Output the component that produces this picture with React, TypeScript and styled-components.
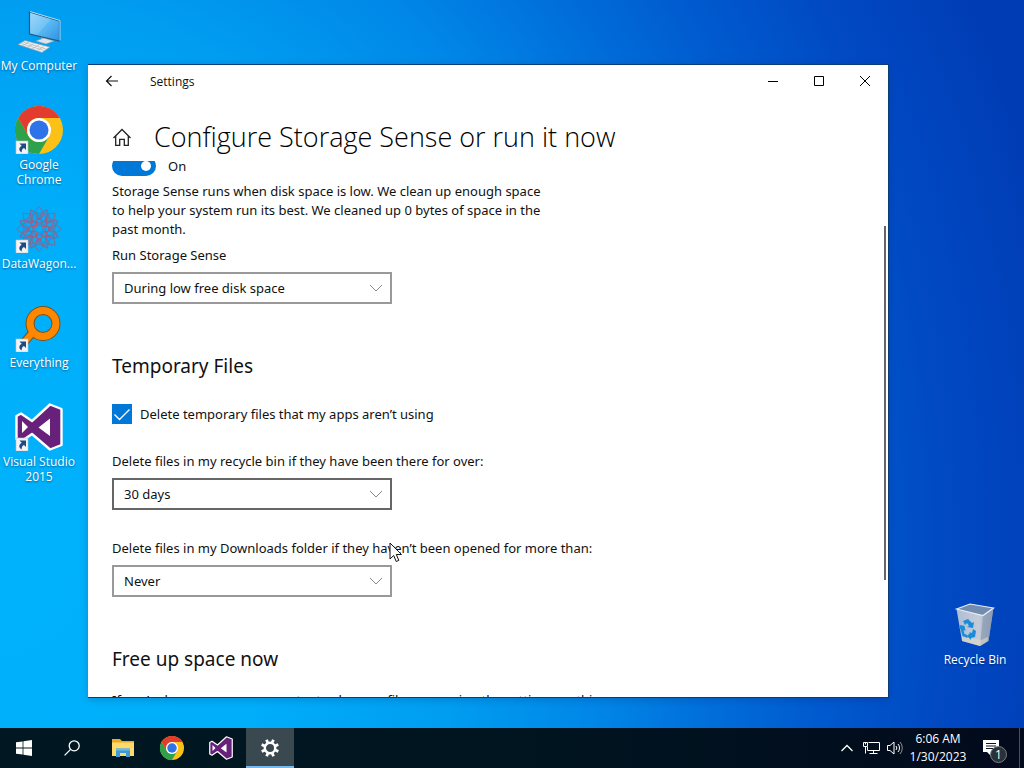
import React from "react";
import styled, { createGlobalStyle } from "styled-components";

const GlobalStyle = createGlobalStyle`
  *, *::before, *::after { box-sizing: border-box; }
  body { margin: 0; font-family: "Open Sans", "Noto Sans", sans-serif; font-size: 13px; color: #111; }
  button, select, input { font: inherit; color: inherit; margin: 0; }
  button { background: none; border: 0; padding: 0; }
  h1, h2, p { margin: 0; font-weight: 400; }
`;

const Screen = styled.div`
  display: flex;
  flex-direction: column;
  height: 100vh;
  overflow: hidden;
`;

const Desktop = styled.main`
  position: relative;
  flex: 1;
  min-height: 0;
  padding-top: 7px;
  background: radial-gradient(
    100% 165% at 0% 75%,
    #00b2fc 0%,
    #00aefa 28%,
    #009df1 46%,
    #0086e7 60%,
    #0072dc 69%,
    #005cd0 80%,
    #004ac4 92%,
    #003cb4 106%
  );
`;

const IconColumn = styled.nav`
  display: grid;
  grid-auto-rows: 99px;
  width: 78px;
`;

const Shortcut = styled.button`
  display: flex;
  flex-direction: column;
  align-items: center;
  justify-content: flex-start;
  gap: 3px;
  width: 78px;
  color: #fff;
  font-size: 12px;
  line-height: 15px;
  text-shadow: 0 1px 2px rgba(0, 20, 60, 0.5);

  svg { display: block; }
`;

const BinSpot = styled.div`
  position: absolute;
  right: 10px;
  bottom: 61px;
`;

const Window = styled.section`
  position: absolute;
  inset: 64px 136px 30px 88px;
  display: flex;
  flex-direction: column;
  background: #fff;
  border: solid #0a3d78;
  border-width: 1px 0;
  box-shadow: 1px 0 #0a3d78, 0 2px 8px rgba(0, 20, 80, 0.2);
`;

const TitleBar = styled.header`
  display: flex;
  align-items: center;
  height: 32px;
  font-size: 12px;
`;

const CaptionButton = styled.button<{ $width?: number }>`
  display: grid;
  place-items: center;
  width: ${(p) => p.$width ?? 46}px;
  height: 32px;
`;

const AppName = styled.span`
  flex: 1;
  padding: 1px 0 0 14px;
`;

const PageHeader = styled.div`
  display: flex;
  align-items: center;
  gap: 22px;
  height: 64px;
  padding: 18px 24px 0 24px;
`;

const HomeButton = styled.button`
  display: grid;
  place-items: center;
  width: 20px;
  height: 20px;
`;

const PageTitle = styled.h1`
  && { font-weight: 300; }
  padding-bottom: 2px;
  color: #000;
  font-size: 27px;
  line-height: 36px;
  white-space: nowrap;
`;

const Viewport = styled.div`
  position: relative;
  flex: 1;
  min-height: 0;
  overflow: hidden;
`;

const Content = styled.div`
  margin-top: -5px;
  padding: 0 24px;
  font-family: "Noto Sans", "Open Sans", sans-serif;
  line-height: 19px;
`;

const ScrollThumb = styled.div`
  position: absolute;
  top: 65px;
  right: 2px;
  width: 2px;
  height: 66%;
  background: #666;
`;

const Row = styled.label<{ $gap: number }>`
  display: flex;
  align-items: center;
  gap: ${(p) => p.$gap}px;
  height: 20px;
`;

const Switch = styled.input`
  appearance: none;
  width: 44px;
  height: 20px;
  padding: 5px;
  border-radius: 10px;
  background: #0078d7;

  &::before {
    content: "";
    display: block;
    width: 10px;
    height: 10px;
    margin-left: auto;
    border-radius: 50%;
    background: #fff;
  }
`;

const Intro = styled.p`
  max-width: 440px;
  padding: 6px 0 7px;
`;

const Field = styled.div`
  display: flex;
  flex-direction: column;
  align-items: flex-start;
  gap: 7px;

  & + & { margin-top: 29px; }
`;

const SelectBox = styled.div`
  display: grid;
  align-items: center;
  width: 280px;
  max-width: 100%;

  > * { grid-area: 1 / 1; }
  > svg { justify-self: end; margin-right: 9px; pointer-events: none; }
`;

const Select = styled.select<{ $active?: boolean }>`
  appearance: none;
  width: 100%;
  height: 32px;
  padding: 0 32px 0 10px;
  border: 2px solid ${(p) => (p.$active ? "#666" : "#999")};
  border-radius: 0;
  background: #fff;
`;

const SectionTitle = styled.h2`
  padding: 48px 0 24px;
  font-size: 19px;
  line-height: 28px;
`;

const CheckMark = styled.span`
  display: grid;
  width: 20px;
  height: 20px;

  > * { grid-area: 1 / 1; }
  > svg { pointer-events: none; }
`;

const CheckInput = styled.input`
  appearance: none;
  width: 20px;
  height: 20px;
  background: #0078d7;
`;

const Options = styled.div`
  padding-top: 28px;
`;

const FooterText = styled.p`
  margin-top: -6px;
  white-space: nowrap;
`;

const Pointer = styled.svg`
  position: absolute;
  left: 389px;
  top: 542px;
`;

const Taskbar = styled.footer`
  display: flex;
  justify-content: space-between;
  height: 40px;
  color: #fff;
  background: linear-gradient(90deg, #001822, #001420 55%, #020a1c);
`;

const TaskGroup = styled.div`
  display: flex;
`;

const PinnedGroup = styled.div`
  display: flex;
  gap: 1px;
  padding-left: 3px;
`;

const TaskButton = styled.button<{ $active?: boolean }>`
  display: grid;
  place-items: center;
  width: 48px;
  height: 40px;
  background: ${(p) => (p.$active ? "#3a4850" : "transparent")};
  box-shadow: ${(p) => (p.$active ? "inset 0 -2px #76b9ed" : "none")};
`;

const TrayButton = styled.button`
  display: grid;
  place-items: center;
  width: 24px;
  height: 40px;
`;

const Clock = styled.button`
  width: 62px;
  font-size: 12px;
  line-height: 18px;
  white-space: nowrap;
`;

const NoticeButton = styled.button`
  position: relative;
  width: 51px;
  height: 40px;
  padding: 0 0 0 14px;
  border-right: 1px solid #46505c;
  margin-right: 4px;
  text-align: left;

  svg { display: block; }
`;

const NoticeCount = styled.span`
  position: absolute;
  left: 21px;
  top: 18px;
  width: 17px;
  height: 17px;
  border: 1px solid #777f87;
  border-radius: 50%;
  background: #2b3138;
  font-size: 12px;
  line-height: 15px;
  text-align: center;
`;

const ShortcutArrow = () => (
  <g>
    <rect x="1" y="35" width="12" height="13" fill="#f4f4f4" stroke="#b8c4cc" strokeWidth=".6" />
    <path d="M4.5 37.5h6.5v6.5l-2-2c-2 1-2.6 2.6-2.2 4.6C3.4 44.6 3.6 41.6 6.7 39.7z" fill="#204a86" />
  </g>
);

const ChromeShape = () => (
  <g>
    <circle cx="24" cy="24" r="24" fill="#fbc116" />
    <path d="M3.200 12A24 24 0 0 0 24 48l10.400-18A12 12 0 0 1 13.600 30z" fill="#2da14b" />
    <path d="M24 12h20.800A24 24 0 0 0 3.200 12l10.400 18A12 12 0 0 1 24 12z" fill="#e33b2e" />
    <circle cx="24" cy="24" r="12" fill="#fff" />
    <circle cx="24" cy="24" r="9.500" fill="#2f73e8" />
  </g>
);

const VsShape = () => (
  <g>
    <path
      d="M35 1.500 46.500 6v36L35 46.500 17 31 6 38.500 1.500 36V13L6 10.500 17 18z"
      fill="#68217a"
      stroke="#fff"
      strokeWidth="2.400"
      strokeLinejoin="round"
    />
    <path d="M7 18v12l6-6zM35 15.500 23.500 24.500 35 33z" fill="#fff" />
  </g>
);

const ComputerIcon = () => (
  <svg width="48" height="48" viewBox="0 0 48 48">
    <defs>
      <linearGradient id="monitor" x1="0" y1="0" x2="1" y2="1">
        <stop offset="0" stopColor="#8ed4fb" />
        <stop offset=".55" stopColor="#56b6f2" />
        <stop offset="1" stopColor="#2e92e0" />
      </linearGradient>
    </defs>
    <path d="M26 29l6 2v3l-6-1z" fill="#9ca9b2" />
    <path d="M21 34l8-3 10 3-8 3z" fill="#dce4e8" stroke="#8aa0ae" strokeWidth=".5" />
    <path d="M14.500 5 44.500 14v20l-30-7z" fill="url(#monitor)" stroke="#24587f" strokeWidth="1.200" />
    <path d="M15 4.500 45 13.500v20" fill="none" stroke="#b6dff4" strokeWidth="1" />
    <path d="M15 6 36 12 22 28l-7-2z" fill="#fff" opacity=".14" />
    <path d="M10 33.500 35 40l-8 5.500L3 37.500z" fill="#eef1f2" stroke="#8d9ba5" strokeWidth=".7" />
    <path d="M8 35l23 7M6 36.500l23 7M14 35l-7 4M19 36.500l-7 4M24 38l-7 4M29 39.500l-7 4" stroke="#adb6bb" strokeWidth=".7" />
  </svg>
);

const ChromeIcon = () => (
  <svg width="48" height="48" viewBox="0 0 48 48">
    <ChromeShape />
    <ShortcutArrow />
  </svg>
);

const RosetteIcon = () => (
  <svg width="48" height="48" viewBox="0 0 48 48">
    <g fill="none" stroke="#6a74a6" strokeWidth="1">
      {[0, 45, 90, 135, 180, 225, 270, 315].map((a) => (
        <g key={a} transform={`rotate(${a} 24 24)`}>
          <path d="M24 15l6-6-6-7.500L18 9z" />
          <path d="M24 18l9-4-1-9-8 4-8-4-1 9z" />
          <path d="M24 12.500l3.500 4.500-3.500 3.500-3.500-3.500z" stroke="#a85a80" />
          <path d="M20 8c1 3 3 4 4 7 1-3 3-4 4-7" stroke="#a85a80" />
        </g>
      ))}
    </g>
    <ShortcutArrow />
  </svg>
);

const EverythingIcon = () => (
  <svg width="48" height="48" viewBox="0 0 48 48">
    <path d="M17 29 7 41" stroke="#7c5118" strokeWidth="8.500" />
    <circle cx="28" cy="19.500" r="13" fill="none" stroke="#7c5118" strokeWidth="9" />
    <path d="M18 28 7 41" stroke="#ff8700" strokeWidth="6.500" />
    <circle cx="28" cy="19.500" r="13" fill="none" stroke="#ff8700" strokeWidth="7" />
    <ShortcutArrow />
  </svg>
);

const VisualStudioIcon = () => (
  <svg width="48" height="48" viewBox="0 0 48 48">
    <VsShape />
    <ShortcutArrow />
  </svg>
);

const BinIcon = () => (
  <svg width="48" height="48" viewBox="0 0 48 48">
    <defs>
      <linearGradient id="bin" x1="0" x2="1">
        <stop offset="0" stopColor="#b7c4d4" />
        <stop offset=".6" stopColor="#cfd3da" />
        <stop offset="1" stopColor="#9caabd" />
      </linearGradient>
    </defs>
    <path d="M5.500 8 32 14.500 42.500 7 37.500 40l-8.500 5L11 40z" fill="url(#bin)" opacity=".95" />
    <path d="M32 14.500 42.500 7 37.500 40l-8.500 5z" fill="#8797ae" opacity=".65" />
    <path d="M5.500 8 19 3l23.500 4L32 14.500z" fill="#718caf" stroke="#e8eff6" strokeWidth="1.200" />
    <path d="M11 36l19 3 7-3-.5 4-7.500 5L11 40z" fill="#e0d8ca" opacity=".6" />
    <g fill="#1c8cd8">
      <path d="M12 20l5-2 4 4 2-1-1 6-6-1 2-1-2-3-2 2z" />
      <path d="M9.500 24l4 1 1 5-2-1 1 4 3 1v3l-5-2-2-7-2-1z" />
      <path d="M18 31l3 1 1-4 3 2-1 6-4 1v2l-4-4 3-3z" />
    </g>
  </svg>
);

const Chevron = () => (
  <svg width="14" height="8" viewBox="0 0 14 8" fill="none" stroke="#888" aria-hidden="true">
    <path d="M1 1l6 6 6-6" />
  </svg>
);

type PickerProps = { id: string; label: string; options: string[]; active?: boolean };

const Picker = ({ id, label, options, active }: PickerProps) => (
  <Field>
    <label htmlFor={id}>{label}</label>
    <SelectBox>
      <Select id={id} $active={active}>
        {options.map((o) => (
          <option key={o}>{o}</option>
        ))}
      </Select>
      <Chevron />
    </SelectBox>
  </Field>
);

const SettingsWindow = () => (
  <Window aria-label="Settings">
    <TitleBar>
      <CaptionButton aria-label="Back" $width={48}>
        <svg width="14" height="12" viewBox="0 0 14 12" fill="none" stroke="#111" strokeWidth="1.200">
          <path d="M13 6H1.500M6.500 1l-5 5 5 5" />
        </svg>
      </CaptionButton>
      <AppName>Settings</AppName>
      <CaptionButton aria-label="Minimize">
        <svg width="10" height="10" stroke="#000"><path d="M0 5.500h10" /></svg>
      </CaptionButton>
      <CaptionButton aria-label="Maximize">
        <svg width="10" height="10" stroke="#000" fill="none"><path d="M.5.5h9v9h-9z" /></svg>
      </CaptionButton>
      <CaptionButton aria-label="Close">
        <svg width="10" height="10" stroke="#000"><path d="M0 0l10 10M10 0 0 10" /></svg>
      </CaptionButton>
    </TitleBar>
    <PageHeader>
      <HomeButton aria-label="Home">
        <svg width="20" height="20" viewBox="0 0 20 20" fill="none" stroke="#222" strokeWidth="1.300">
          <path d="M1.500 10 10 1.500l8.500 8.500M3.700 8v9.300h4v-6h4.600v6h4V8" />
        </svg>
      </HomeButton>
      <PageTitle>Configure Storage Sense or run it now</PageTitle>
    </PageHeader>
    <Viewport>
      <Content>
        <Row $gap={12}>
          <Switch type="checkbox" role="switch" defaultChecked />
          On
        </Row>
        <Intro>
          Storage Sense runs when disk space is low. We clean up enough space to help your system run
          its best. We cleaned up 0 bytes of space in the past month.
        </Intro>
        <Picker id="run" label="Run Storage Sense" options={["During low free disk space", "Every day", "Every week", "Every month"]} />
        <SectionTitle>Temporary Files</SectionTitle>
        <Row $gap={8}>
          <CheckMark>
            <CheckInput type="checkbox" defaultChecked />
            <svg width="20" height="20" fill="none" stroke="#fff" strokeWidth="1.400">
              <path d="M2.500 10.500 7.500 15.500 17.500 5.500" />
            </svg>
          </CheckMark>
          Delete temporary files that my apps aren’t using
        </Row>
        <Options>
          <Picker
            id="bin-age"
            label="Delete files in my recycle bin if they have been there for over:"
            options={["30 days", "Never", "1 day", "14 days", "60 days"]}
            active
          />
          <Picker
            id="downloads-age"
            label="Delete files in my Downloads folder if they haven’t been opened for more than:"
            options={["Never", "1 day", "14 days", "30 days", "60 days"]}
          />
        </Options>
        <SectionTitle>Free up space now</SectionTitle>
        <FooterText>
          If you’re low on space, we can try to clean up files now using the settings on this page.
        </FooterText>
      </Content>
      <ScrollThumb />
    </Viewport>
  </Window>
);

export default function App() {
  return (
    <Screen>
      <GlobalStyle />
      <Desktop>
        <IconColumn aria-label="Desktop">
          <Shortcut><ComputerIcon />My Computer</Shortcut>
          <Shortcut><ChromeIcon /><span>Google<br />Chrome</span></Shortcut>
          <Shortcut><RosetteIcon />DataWagon...</Shortcut>
          <Shortcut><EverythingIcon />Everything</Shortcut>
          <Shortcut><VisualStudioIcon /><span>Visual Studio<br />2015</span></Shortcut>
        </IconColumn>
        <BinSpot>
          <Shortcut><BinIcon />Recycle Bin</Shortcut>
        </BinSpot>
        <SettingsWindow />
        <Pointer width="14" height="22" viewBox="0 0 14 22" aria-hidden="true">
          <path d="M1 1v16l3.700-3.500 2.500 6 2.600-1.100-2.500-5.900h5.200z" fill="#fff" stroke="#111" />
        </Pointer>
      </Desktop>
      <Taskbar>
        <TaskGroup>
          <TaskButton aria-label="Start">
            <svg width="16" height="16" viewBox="0 0 16 16" fill="#fff">
              <path d="M0 2.300 6.600 1.400v6.200H0zM7.400 1.300 16 0v7.600H7.400zM0 8.400h6.600v6.200L0 13.700zM7.400 8.400H16V16l-8.600-1.300z" />
            </svg>
          </TaskButton>
          <TaskButton aria-label="Search">
            <svg width="16" height="16" viewBox="0 0 16 16" fill="none" stroke="#fff" strokeWidth="1.300">
              <circle cx="10.200" cy="5.800" r="5" />
              <path d="M6.600 9.400.6 15.400" />
            </svg>
          </TaskButton>
          <PinnedGroup>
            <TaskButton aria-label="File Explorer">
              <svg width="22" height="18" viewBox="0 0 22 18">
                <path d="M0 0h8l2 2h12v15H0z" fill="#e9a92c" />
                <path d="M0 3.500h22V17H0z" fill="#ffda6a" />
                <path d="M4 18V9.500h14V18h-4v-4H8v4z" fill="#3f9bd4" />
                <path d="M4 9.500h14v2H4z" fill="#6dbce8" />
              </svg>
            </TaskButton>
            <TaskButton aria-label="Google Chrome">
              <svg width="24" height="24" viewBox="0 0 48 48"><ChromeShape /></svg>
            </TaskButton>
            <TaskButton aria-label="Visual Studio">
              <svg width="24" height="24" viewBox="0 0 48 48"><VsShape /></svg>
            </TaskButton>
            <TaskButton aria-label="Settings" $active>
              <svg width="18" height="18" viewBox="0 0 18 18" fill="none" stroke="#fff">
                <circle cx="9" cy="9" r="5.200" strokeWidth="2.400" />
                {[22, 67, 112, 157, 202, 247, 292, 337].map((a) => (
                  <path key={a} d="M9 0v3.500" strokeWidth="2.800" transform={`rotate(${a} 9 9)`} />
                ))}
              </svg>
            </TaskButton>
          </PinnedGroup>
        </TaskGroup>
        <TaskGroup>
          <TrayButton aria-label="Show hidden icons">
            <svg width="12" height="8" fill="none" stroke="#fff" strokeWidth="1.300"><path d="M.5 7 6 1.500 11.500 7" /></svg>
          </TrayButton>
          <TrayButton aria-label="Network">
            <svg width="17" height="14" viewBox="0 0 17 14" fill="none" stroke="#fff">
              <path d="M5.500 1.500h11v8h-12V6M10.500 9.500v3M6.500 12.500h8M2.500 5.500v7" />
              <path d="M.5 1.500h4v4h-4zM2.500 1.500v2" />
            </svg>
          </TrayButton>
          <TrayButton aria-label="Volume">
            <svg width="16" height="14" viewBox="0 0 16 14" fill="none" stroke="#fff">
              <path d="M.5 4.500h2.500l4-3.500v12L3 9.500H.5z" />
              <path d="M9 5a3 3 0 0 1 0 4M11 3a6 6 0 0 1 0 8" />
              <path d="M13 1a9 9 0 0 1 0 12" opacity=".55" />
            </svg>
          </TrayButton>
          <Clock>6:06 AM<br />1/30/2023</Clock>
          <NoticeButton aria-label="Notifications">
            <svg width="16" height="16" viewBox="0 0 16 16">
              <path d="M0 0h16v12H8v4l-4-4H0z" fill="#fff" />
              <path d="M3 3.500h10M3 6h10M3 8.500h7" stroke="#0a1422" />
            </svg>
            <NoticeCount>1</NoticeCount>
          </NoticeButton>
        </TaskGroup>
      </Taskbar>
    </Screen>
  );
}
